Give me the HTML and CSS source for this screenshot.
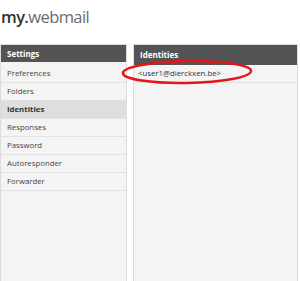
FILE: index.html
```html
<!DOCTYPE html>
<html lang="en">
<head>
  <meta charset="UTF-8" />
  <title>my.webmail</title>
  <link rel="stylesheet" href="styles.css">
</head>
<body>

  <div class="topbar">
    <div class="logo"><span class="logo-my">my.</span><span class="logo-web">webmail</span></div>
  </div>

  <div class="layout">
    <div class="panel sidebar">
      <div class="panel-head">Settings</div>
      <ul class="menu">
        <li>Preferences</li>
        <li>Folders</li>
        <li class="active">Identities</li>
        <li>Responses</li>
        <li>Password</li>
        <li>Autoresponder</li>
        <li>Forwarder</li>
      </ul>
    </div>

    <div class="panel content">
      <div class="panel-head tall">Identities</div>
      <ul class="idlist">
        <li>&lt;user1@dierckxen.be&gt;</li>
      </ul>
      <svg class="mark" width="140" height="32" viewBox="0 0 140 32">
        <ellipse cx="66" cy="14" rx="64" ry="11" fill="none" stroke="#e3161b" stroke-width="2.6" transform="rotate(-1 66 14)"/>
      </svg>
    </div>
  </div>

</body>
</html>
```

FILE: styles.css
```css
* {
  box-sizing: border-box;
  margin: 0;
  padding: 0;
}

body {
  font-family: 'Open Sans', 'Liberation Sans', sans-serif;
  background: #fff;
  width: 300px;
  height: 281px;
  overflow: hidden;
  display: flex;
  flex-direction: column;
}

.topbar {
  height: 45px;
  padding: 6px 0 0 1px;
  border-bottom: 1px solid #f6f6f6;
}

.logo {
  font-size: 16.5px;
  letter-spacing: -0.6px;
  line-height: 22px;
}

.logo-my {
  color: #333;
  font-weight: 600;
}

.logo-web {
  color: #6b6b6b;
}

.layout {
  flex: 1;
  display: flex;
  gap: 6px;
  padding-right: 2px;
  margin-top: -1px;
}

.panel {
  background: #f4f4f4;
  border: 1px solid #dcdcdc;
  border-bottom: none;
  position: relative;
}

.sidebar {
  width: 127px;
}

.content {
  flex: 1;
}

.panel-head {
  background: #545454;
  color: #fff;
  font-size: 8px;
  font-weight: 700;
  height: 17px;
  line-height: 17px;
  padding-left: 6px;
}

.panel-head.tall {
  height: 20px;
  line-height: 20px;
}

.menu {
  list-style: none;
  padding-top: 3px;
}

.menu li,
.idlist li {
  height: 18px;
  line-height: 17px;
  font-size: 7.8px;
  color: #444;
  padding-left: 6px;
  border-bottom: 1px solid #e2e2e2;
}

.menu li.active {
  background: #dedede;
  font-weight: 700;
  color: #333;
}

.idlist {
  list-style: none;
}

.idlist li {
  padding-left: 4px;
  color: #333;
}

.mark {
  position: absolute;
  left: -13px;
  top: 13px;
}
```
